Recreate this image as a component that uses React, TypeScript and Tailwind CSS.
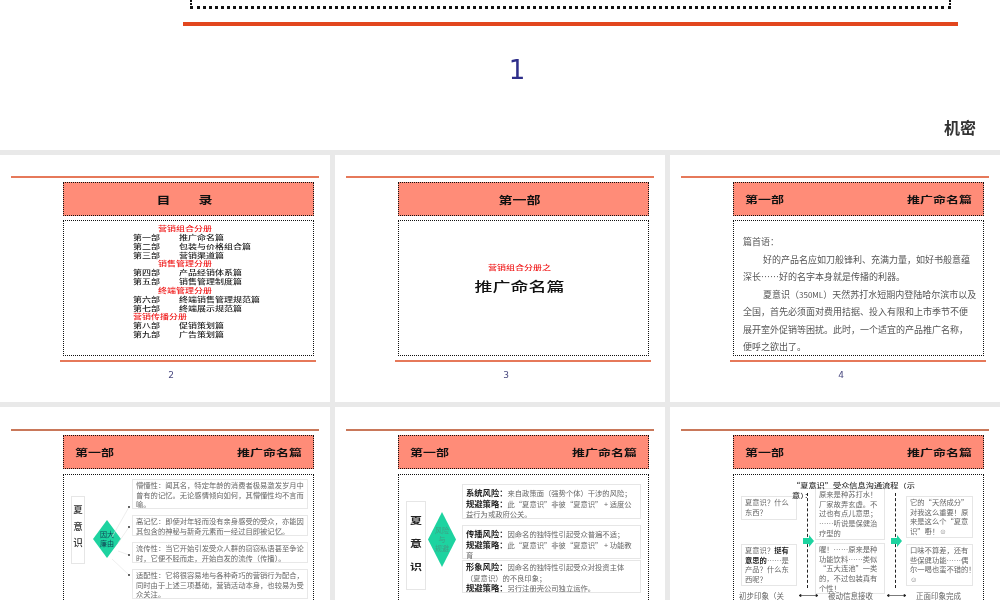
import React from "react";

const font = { fontFamily: '"Noto Sans CJK SC", "Liberation Sans", sans-serif' };

function Slide({ n, row2, left, right, center, children }: { n: number; row2?: boolean; left?: string; right?: string; center?: React.ReactNode; children: React.ReactNode }) {
  return (
    <div className={`relative h-[247px] overflow-hidden bg-white ${row2 ? "pt-[22px]" : "pt-[21px]"}`}>
      <div className={`ml-[11px] h-[2px] w-[308px] ${row2 ? "bg-[#c9785a]" : "bg-[#e6795a]"}`} />
      <div className={`ml-[63px] mt-[4px] flex h-[34px] w-[251px] items-center border border-dotted border-[#111] bg-[#ff8c78] px-[11px] font-bold text-[13px] text-[#111] ${center ? "justify-center" : "justify-between"}`}>
        {center ? <div className="mr-[8px] flex scale-y-[0.75] text-[14px]">{center}</div> : (
          <>
            <span className="scale-y-[0.72]">{left}</span>
            <span className="scale-y-[0.72]">{right}</span>
          </>
        )}
      </div>
      <div className={`relative ml-[63px] h-[136px] w-[251px] border border-dotted border-[#111] bg-white ${row2 ? "mt-[5px]" : "mt-[4px]"}`}>{children}</div>
      <div className="ml-[60px] mt-[4px] h-[2px] w-[256px] bg-[#e6795a]" />
      <div className="mt-[8px] ml-[60px] w-[222px] text-center text-[9px] leading-[11px] text-[#4a4a80]" style={{ fontFamily: '"DejaVu Sans", sans-serif' }}>{n}</div>
    </div>
  );
}

const toc: [string, string?][] = [
  ["营销组合分册"],
  ["第一部", "推广命名篇"],
  ["第二部", "包装与价格组合篇"],
  ["第三部", "营销渠道篇"],
  ["销售管理分册"],
  ["第四部", "产品经销体系篇"],
  ["第五部", "销售管理制度篇"],
  ["终端管理分册"],
  ["第六部", "终端销售管理规范篇"],
  ["第七部", "终端展示规范篇"],
  ["营销传播分册"],
  ["第八部", "促销策划篇"],
  ["第九部", "广告策划篇"],
];

function Toc() {
  return (
    <div className="pl-[69px] pt-[4px] text-[9px] leading-[8.85px] font-medium text-[#222]">
      {toc.map(([a, b], i) =>
        b ? (
          <div key={i} className="flex h-[8.85px] scale-y-[0.72] whitespace-nowrap">
            <span className="w-[46px]">{a}</span>
            <span>{b}</span>
          </div>
        ) : (
          <div key={i} className={`h-[8.85px] scale-y-[0.72] whitespace-nowrap text-[#f01818] ${i === 10 ? "" : "pl-[25px]"}`}>{a}</div>
        )
      )}
    </div>
  );
}

function Intro() {
  return (
    <div className="px-[9px] pt-[12px] text-[9px] leading-[17.5px] text-[#555] whitespace-nowrap">
      <div>篇首语：</div>
      <div className="pl-[20px]">好的产品名应如刀般锋利、充满力量，如好书般意蕴</div>
      <div>深长……好的名字本身就是传播的利器。</div>
      <div className="pl-[20px]">夏意识（<span className="text-[8px]">350ML</span>）天然苏打水短期内登陆哈尔滨市以及</div>
      <div>全国，首先必须面对费用拮据、投入有限和上市季节不便</div>
      <div>展开室外促销等困扰。此时，一个适宜的产品推广名称，</div>
      <div>便呼之欲出了。</div>
    </div>
  );
}

function Diamond({ className, lines, tone }: { className: string; lines: string[]; tone: string }) {
  return (
    <div className={`relative flex shrink-0 flex-col items-center justify-center text-[7px] leading-[9px] [clip-path:polygon(50%_0,100%_50%,50%_100%,0_50%)] bg-[#1dd3a0] ${tone} ${className}`}>
      {lines.map((l) => <span key={l}>{l}</span>)}
    </div>
  );
}

const reasons = [
  { h: "h-[30px]", t: "懵懂性：闻其名，特定年龄的消费者极易激发岁月中曾有的记忆。无论感情倾向如何，其懵懂性均不言而喻。" },
  { h: "h-[21px]", t: "高记忆：即使对年轻而没有亲身感受的受众，亦能因其包含的神秘与新奇元素而一经过目即被记忆。" },
  { h: "h-[21px]", t: "流传性：当它开始引发受众人群的窃窃私语甚至争论时，它便不胫而走，开始自发的流传（传播）。" },
  { h: "h-[30px]", t: "适配性：它将很容易地与各种奇巧的营销行为配合，同时由于上述三项基础，营销活动本身，也较易为受众关注。" },
];

function Reasons() {
  return (
    <div className="flex h-full items-start pl-[7px] pt-[4px]">
      <div className="mt-[17px] flex h-[68px] w-[14px] shrink-0 flex-col items-center gap-[7px] border border-[#e6e6e6] pt-[8px] text-[9.5px] leading-[9.5px] font-medium text-[#333]">
        <span>夏</span>
        <span>意</span>
        <span>识</span>
      </div>
      <Diamond className="ml-[8px] mt-[41px] h-[38px] w-[28px]" lines={["因大", "廉由"]} tone="text-[#145]" />
      <div className="ml-[11px] flex w-[176px] shrink-0 flex-col gap-[6px]">
        {reasons.map((r) => (
          <div key={r.t} className={`${r.h} border border-[#e8e8e8] px-[3px] pt-[1px] text-[7.3px] leading-[9.7px] text-[#666]`}>{r.t}</div>
        ))}
      </div>
      <svg className="absolute left-[44px] top-[24px] h-[90px] w-[24px]" viewBox="0 0 24 90" fill="none">
        <path d="M4 38 L21 8 M10 44 L21 28 M10 52 L21 56 M4 60 L21 76" stroke="#e2e2e2" strokeWidth="0.6" />
        <g fill="#222">
          <circle cx="21" cy="8" r="0.9" />
          <circle cx="21" cy="28" r="0.9" />
          <circle cx="21" cy="56" r="0.9" />
          <circle cx="21" cy="76" r="0.9" />
        </g>
      </svg>
    </div>
  );
}

const risks = [
  { h: "h-[35px]", a: ["系统风险", "来自政策面（强势个体）干涉的风险；"], b: ["规避策略", "此“夏意识”非彼“夏意识” + 适度公益行为或政府公关。"] },
  { h: "h-[34px]", a: ["传播风险", "因命名的独特性引起受众普遍不适；"], b: ["规避策略", "此“夏意识”非彼“夏意识” + 功能教育"] },
  { h: "h-[33px]", a: ["形象风险", "因命名的独特性引起受众对投资主体（夏意识）的不良印象；"], b: ["规避策略", "另行注册壳公司独立运作。"] },
];

function Risks() {
  return (
    <div className="flex h-full items-start pl-[7px]">
      <div className="mt-[26px] flex h-[89px] w-[20px] shrink-0 flex-col items-center gap-[11px] border border-[#e6e6e6] pt-[12px] text-[12px] leading-[12px] font-bold text-[#222]">
        <span className="scale-y-[0.8]">夏</span>
        <span className="scale-y-[0.8]">意</span>
        <span className="scale-y-[0.8]">识</span>
      </div>
      <Diamond className="ml-[2px] mt-[37px] h-[55px] w-[28px]" lines={["风险", "与", "规避"]} tone="text-[#3f9f86]" />
      <div className="ml-[6px] mt-[9px] flex w-[179px] shrink-0 flex-col">
        {risks.map((r, i) => (
          <div key={i} className={`${r.h} ${i === 0 ? "mb-[6px] pt-[3px]" : i === 1 ? "mb-[1px] pt-[3px]" : "pt-[1px]"} border border-[#e6e6e6] px-[3px] text-[7.3px] leading-[10.5px] text-[#666]`}>
            <b className="text-[8.3px] leading-[8px] text-[#222]">{r.a[0]}：</b>{r.a[1]}
            <br />
            <b className="text-[8.3px] leading-[8px] text-[#222]">{r.b[0]}：</b>{r.b[1]}
          </div>
        ))}
      </div>
    </div>
  );
}

function Note({ className, children }: { className: string; children: React.ReactNode }) {
  return <div className={`overflow-hidden whitespace-nowrap border border-[#e6e6e6] bg-white pl-[3px] pt-[1px] text-[7.3px] leading-[9.7px] text-[#666] ${className}`}>{children}</div>;
}

function Arrow({ className }: { className: string }) {
  return (
    <svg className={`absolute h-[12px] w-[11px] ${className}`} viewBox="0 0 11 12">
      <path d="M0 3 H6 V0 L11 6 L6 12 V9 H0 Z" fill="#1dd3a0" />
    </svg>
  );
}

function DoubleArrow({ className }: { className: string }) {
  return (
    <svg className={`absolute h-[5px] w-[21px] ${className}`} viewBox="0 0 21 5">
      <path d="M1 2.5 H20 M1 2.5 L3 1.2 V3.8 Z M20 2.5 L18 1.2 V3.8 Z" stroke="#222" strokeWidth="0.6" fill="#222" />
    </svg>
  );
}

function Flow() {
  return (
    <div className="h-full">
      <div className="absolute left-[58px] top-[5px] z-10 w-[128px] origin-top scale-y-[0.8] text-[8.2px] leading-[12px] font-medium text-[#333]">
        “夏意识”受众信息沟通流程（示意）：
      </div>
      <div className="flex items-start pl-[7px]">
        <div className="mt-[21px] flex w-[56px] shrink-0 flex-col gap-[24px]">
          <Note className="h-[24px]">夏意识？什么<br />东西？</Note>
          <Note className="h-[42px]">夏意识？<b className="text-[#222]">挺有<br />意思的</b>……是<br />产品？什么东<br />西呢？</Note>
        </div>
        <div className="ml-[10px] mt-[18px] h-[95px] w-0 shrink-0 border-l border-dashed border-[#222]" />
        <div className="ml-[7px] mt-[13px] flex w-[70px] shrink-0 flex-col gap-[3px]">
          <Note className="h-[52px]">原来是种苏打水！<br />厂家故弄玄虚。不<br />过也有点儿意思；<br />……听说是保健治<br />疗型的</Note>
          <Note className="h-[51px]">喔！……原来是种<br />功能饮料……类似<br />“五大连池”一类<br />的，不过包装真有<br />个性！</Note>
        </div>
        <div className="ml-[10px] mt-[18px] h-[95px] w-0 shrink-0 border-l border-dashed border-[#222]" />
        <div className="ml-[10px] mt-[21px] flex w-[67px] shrink-0 flex-col gap-[6px]">
          <Note className="h-[42px]">它的“天然成分”<br />对我这么重要！原<br />来是这么个“夏意<br />识”嘢！☺</Note>
          <Note className="h-[42px]">口味不算差，还有<br />些保健功能……偶<br />尔一喝也蛮不错的！<br />☺</Note>
        </div>
      </div>
      <Arrow className="left-[69px] top-[60px]" />
      <Arrow className="left-[157px] top-[60px]" />
      <DoubleArrow className="left-[64px] top-[118px]" />
      <DoubleArrow className="left-[152px] top-[118px]" />
      <div className="absolute left-[5px] top-[116px] text-[7.5px] leading-[10px] text-[#666]">初步印象（关</div>
      <div className="absolute left-[94px] top-[116px] text-[7.5px] leading-[10px] text-[#666]">被动信息接收</div>
      <div className="absolute left-[182px] top-[116px] text-[7.5px] leading-[10px] text-[#666]">正面印象完成</div>
    </div>
  );
}

export default function App() {
  const l = "第一部";
  const r = "推广命名篇";
  return (
    <div className="h-[600px] w-[1000px] overflow-hidden bg-[#e9e9e9] blur-[0.4px]" style={font}>
      <div className="h-[150px] overflow-hidden bg-white">
        <div className="ml-[190px] h-[9px] w-[761px] border-x-[2px] border-b-[3px] border-dotted border-[#111]" />
        <div className="ml-[183px] mt-[13px] h-[4px] w-[775px] bg-[#e2461e]" />
        <div className="mt-[29px] ml-[183px] w-[668px] text-center text-[26px] leading-[30px] text-[#2e2e8a]" style={{ fontFamily: '"DejaVu Sans", sans-serif' }}>1</div>
        <div className="mt-[32px] pr-[24px] text-right text-[16px] leading-[20px] font-bold text-[#333]">机密</div>
      </div>
      <div className="grid grid-cols-[330px_330px_330px] gap-[5px] pt-[5px]">
        <Slide n={2} center={<><span>目</span><span className="ml-[28px]">录</span></>}><Toc /></Slide>
        <Slide n={3} center={<span>第一部</span>}>
          <div className="flex h-full flex-col items-center pr-[8px] pt-[41px]">
            <div className="scale-y-[0.72] text-[9px] leading-[11px] font-medium text-[#f01818]">营销组合分册之</div>
            <div className="mt-[1px] scale-y-[0.72] text-[18px] leading-[22px] font-medium text-[#111]">推广命名篇</div>
          </div>
        </Slide>
        <Slide n={4} left={l} right={r}><Intro /></Slide>
        <Slide n={5} row2 left={l} right={r}><Reasons /></Slide>
        <Slide n={6} row2 left={l} right={r}><Risks /></Slide>
        <Slide n={7} row2 left={l} right={r}><Flow /></Slide>
      </div>
    </div>
  );
}
